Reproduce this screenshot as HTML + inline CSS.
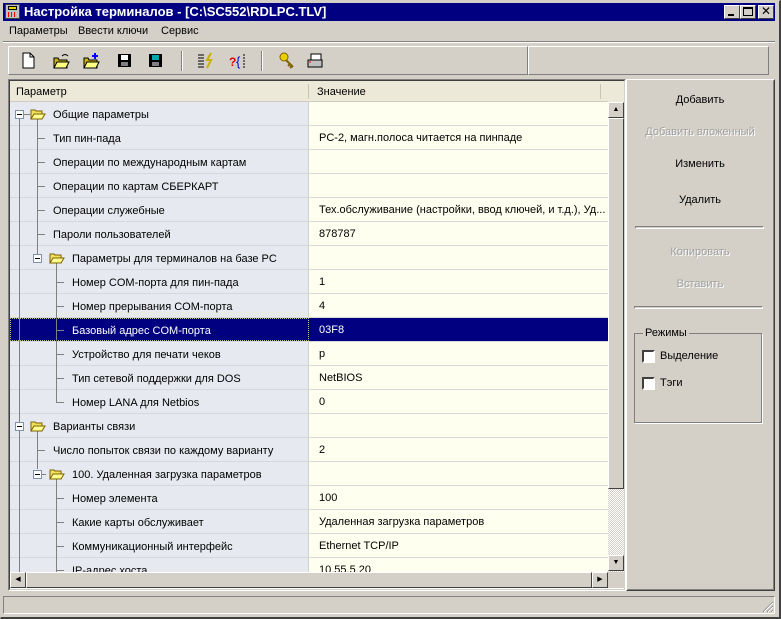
<!DOCTYPE html>
<html style="overflow:hidden"><head><meta charset="utf-8"><style>
*{margin:0;padding:0;box-sizing:border-box}
html,body{width:781px;height:619px;overflow:hidden}
body{background:#d4d0c8;font-family:"Liberation Sans","DejaVu Sans",sans-serif;font-size:11px;position:relative;color:#000}
.a{position:absolute}
.t{position:absolute;white-space:nowrap;line-height:13px}
.rs{position:absolute;left:10px;width:598px;height:24px;border-bottom:1px solid #d8d8d8}
.nm{position:absolute;left:0;top:0;width:299px;height:23px;background:#e6e9ef;border-right:1px solid #d0d0d0}
.vl{position:absolute;left:299px;top:0;width:299px;height:23px;background:#fffff0}
.rs .t{top:6px}
.btn{position:absolute;left:627px;width:146px;text-align:center}
.dis{color:#a0a0a0;text-shadow:1px 1px 0 #fff}
.box{position:absolute;width:9px;height:9px;border:1px solid #8090a8;background:#fff}
.box:after{content:"";position:absolute;left:1px;top:3px;width:5px;height:1px;background:#000}
</style></head><body>
<div class="a" style="left:0;top:0;width:781px;height:619px;border:1px solid #d4d0c8;border-right:2px solid #404040;border-bottom:2px solid #404040"></div>
<div class="a" style="left:3px;top:3px;width:772px;height:18px;background:#000080"></div>
<div class="a" style="left:5px;top:4px;width:15px;height:15px;background:#c0c0c0;border:1px solid #404040"><div class="a" style="left:2px;top:1px;width:9px;height:4px;background:#e8d800;border:1px solid #000"></div><div class="a" style="left:2px;top:7px;width:9px;height:5px;background:repeating-linear-gradient(90deg,#f00 0 1px,#c0c0c0 1px 3px)"></div></div>
<div class="t" style="left:24px;top:5px;color:#fff;font-weight:bold;font-size:13px">Настройка терминалов - [C:\SC552\RDLPC.TLV]</div>
<div class="a" style="left:724px;top:5px;width:16px;height:14px;background:#d4d0c8;border:1px solid;border-color:#fff #404040 #404040 #fff"><div class="a" style="left:3px;top:8px;width:6px;height:2px;background:#000"></div></div>
<div class="a" style="left:740px;top:5px;width:16px;height:14px;background:#d4d0c8;border:1px solid;border-color:#fff #404040 #404040 #fff"><div class="a" style="left:2px;top:1px;width:10px;height:9px;border:1px solid #000;border-top-width:2px"></div></div>
<div class="a" style="left:758px;top:5px;width:16px;height:14px;background:#d4d0c8;border:1px solid;border-color:#fff #404040 #404040 #fff;font-weight:bold;font-size:12px;line-height:11px;text-align:center">✕</div>
<div class="t" style="left:9px;top:25px">Параметры</div>
<div class="t" style="left:78px;top:25px">Ввести ключи</div>
<div class="t" style="left:161px;top:25px">Сервис</div>
<div class="a" style="left:3px;top:41px;width:772px;height:1px;background:#808080"></div>
<div class="a" style="left:3px;top:42px;width:772px;height:1px;background:#fff"></div>
<div class="a" style="left:8px;top:46px;width:520px;height:29px;border:1px solid;border-color:#fff #808080 #808080 #fff"></div>
<div class="a" style="left:528px;top:46px;width:241px;height:29px;border:1px solid;border-color:#fff #808080 #808080 #fff"></div>
<svg class="a" style="left:18px;top:50px" width="350" height="22">
<path d="M5 3h7l4 4v11H5z" fill="#fff" stroke="#000"/><path d="M12 3v4h4" fill="none" stroke="#000"/>
<path d="M36 8h4l1 2h8v8H36z" fill="#c8b400" stroke="#000"/><path d="M36 18l3-6h12l-3 6z" fill="#ffff80" stroke="#000"/><path d="M44 6q3-3 6 0" fill="none" stroke="#000"/>
<path d="M66 8h4l1 2h8v8H66z" fill="#c8b400" stroke="#000"/><path d="M66 18l3-6h12l-3 6z" fill="#ffff80" stroke="#000"/><path d="M77 3v6M74 6h6" stroke="#00f" stroke-width="2"/>
<rect x="100" y="4" width="13" height="13" fill="#000"/><rect x="103" y="5" width="7" height="5" fill="#fff"/><rect x="103" y="12" width="7" height="4" fill="#808080"/>
<rect x="131" y="4" width="13" height="13" fill="#000"/><rect x="134" y="5" width="7" height="5" fill="#0aa"/><rect x="134" y="12" width="7" height="4" fill="#808080"/>
<path d="M180 5h6M180 8h6M180 11h6M180 14h6M180 17h6" stroke="#000"/><path d="M193 3l-4 7h4l-4 8" fill="none" stroke="#c8b000" stroke-width="2"/>
<text x="211" y="16" fill="#e00000" font-weight="bold" font-size="12" font-family="Liberation Sans">?</text><text x="218" y="16" fill="#0000e0" font-size="13" font-family="Liberation Sans">{</text><path d="M226 4v14" stroke="#000" stroke-dasharray="2 1"/>
<circle cx="266" cy="7" r="4" fill="#e8d000" stroke="#806000"/><path d="M268 10l7 7M272 14l-2 2M274 16l-2 2" stroke="#806000" stroke-width="2"/>
<rect x="293" y="4" width="10" height="10" fill="#fff" stroke="#000"/><rect x="290" y="10" width="14" height="7" fill="#c0c0c0" stroke="#000"/><path d="M291 12h2" stroke="#f00"/>
</svg>
<div class="a" style="left:181px;top:51px;width:2px;height:20px;border-left:1px solid #808080;border-right:1px solid #fff"></div>
<div class="a" style="left:261px;top:51px;width:2px;height:20px;border-left:1px solid #808080;border-right:1px solid #fff"></div>
<div class="a" style="left:8px;top:79px;width:618px;height:512px;border:1px solid;border-color:#808080 #fff #fff #808080"></div>
<div class="a" style="left:9px;top:80px;width:616px;height:510px;border:1px solid;border-color:#404040 #d4d0c8 #d4d0c8 #404040;background:#fff"></div>
<div class="a" style="left:10px;top:81px;width:598px;height:21px;background:#ece9d8;border-bottom:1px solid #d0ccc0"></div>
<div class="a" style="left:308px;top:84px;width:1px;height:15px;background:#c8c4b8"></div>
<div class="a" style="left:600px;top:84px;width:1px;height:15px;background:#c8c4b8"></div>
<div class="t" style="left:16px;top:86px">Параметр</div>
<div class="t" style="left:317px;top:86px">Значение</div>
<div class="a" style="left:608px;top:81px;width:16px;height:21px;background:#ece9d8"></div>

<div class="a" style="left:10px;top:102px;width:598px;height:470px;overflow:hidden">
<div style="position:absolute;left:-10px;top:-102px;width:620px;height:572px">
<div class="rs" style="top:102px"><div class="nm"></div><div class="vl"></div></div>
<div class="rs" style="top:126px"><div class="nm"></div><div class="vl"><div class="t" style="left:10px">PC-2, магн.полоса читается на пинпаде</div></div></div>
<div class="rs" style="top:150px"><div class="nm"></div><div class="vl"></div></div>
<div class="rs" style="top:174px"><div class="nm"></div><div class="vl"></div></div>
<div class="rs" style="top:198px"><div class="nm"></div><div class="vl"><div class="t" style="left:10px">Тех.обслуживание (настройки, ввод ключей, и т.д.), Уд...</div></div></div>
<div class="rs" style="top:222px"><div class="nm"></div><div class="vl"><div class="t" style="left:10px">878787</div></div></div>
<div class="rs" style="top:246px"><div class="nm"></div><div class="vl"></div></div>
<div class="rs" style="top:270px"><div class="nm"></div><div class="vl"><div class="t" style="left:10px">1</div></div></div>
<div class="rs" style="top:294px"><div class="nm"></div><div class="vl"><div class="t" style="left:10px">4</div></div></div>
<div class="rs" style="top:318px"><div class="nm" style="background:#000080;border:1px dotted #c0c080"></div><div class="vl" style="background:#000080"><div class="t" style="left:10px;color:#fff">03F8</div></div></div>
<div class="rs" style="top:342px"><div class="nm"></div><div class="vl"><div class="t" style="left:10px">p</div></div></div>
<div class="rs" style="top:366px"><div class="nm"></div><div class="vl"><div class="t" style="left:10px">NetBIOS</div></div></div>
<div class="rs" style="top:390px"><div class="nm"></div><div class="vl"><div class="t" style="left:10px">0</div></div></div>
<div class="rs" style="top:414px"><div class="nm"></div><div class="vl"></div></div>
<div class="rs" style="top:438px"><div class="nm"></div><div class="vl"><div class="t" style="left:10px">2</div></div></div>
<div class="rs" style="top:462px"><div class="nm"></div><div class="vl"></div></div>
<div class="rs" style="top:486px"><div class="nm"></div><div class="vl"><div class="t" style="left:10px">100</div></div></div>
<div class="rs" style="top:510px"><div class="nm"></div><div class="vl"><div class="t" style="left:10px">Удаленная загрузка параметров</div></div></div>
<div class="rs" style="top:534px"><div class="nm"></div><div class="vl"><div class="t" style="left:10px">Ethernet TCP/IP</div></div></div>
<div class="rs" style="top:558px"><div class="nm"></div><div class="vl"><div class="t" style="left:10px">10.55.5.20</div></div></div>
<svg class="a" style="left:0;top:0" width="320" height="572">
<g stroke="#808080" fill="none">
<path d="M19.5 119v453M24 114.5h6"/>
<path d="M37.5 119v141M37 138.5h8M37 162.5h8M37 186.5h8M37 210.5h8M37 234.5h8"/>
<path d="M56.5 263v140M56 282.5h8M56 306.5h8M56 330.5h8M56 354.5h8M56 378.5h8M56 402.5h8"/>
<path d="M37.5 431v38M37 450.5h8M42 474.5h4"/>
<path d="M56.5 479v93M56 498.5h8M56 522.5h8M56 546.5h8M56 570.5h8"/>
</g>
<g fill="#f0e060" stroke="#806000">
<path d="M31 110h4l1 1h6v8H31z"/><path d="M31 119l3-5h11l-3 5z" fill="#ffff90"/>
<path d="M50 254h4l1 1h6v8H50z"/><path d="M50 263l3-5h11l-3 5z" fill="#ffff90"/>
<path d="M31 422h4l1 1h6v8H31z"/><path d="M31 431l3-5h11l-3 5z" fill="#ffff90"/>
<path d="M50 470h4l1 1h6v8H50z"/><path d="M50 479l3-5h11l-3 5z" fill="#ffff90"/>
</g>
</svg>
<div class="box" style="left:15px;top:110px"></div>
<div class="box" style="left:33px;top:254px"></div>
<div class="box" style="left:15px;top:422px"></div>
<div class="box" style="left:33px;top:470px"></div>
<div class="t" style="left:53px;top:109px">Общие параметры</div>
<div class="t" style="left:53px;top:133px">Тип пин-пада</div>
<div class="t" style="left:53px;top:157px">Операции по международным картам</div>
<div class="t" style="left:53px;top:181px">Операции по картам СБЕРКАРТ</div>
<div class="t" style="left:53px;top:205px">Операции служебные</div>
<div class="t" style="left:53px;top:229px">Пароли пользователей</div>
<div class="t" style="left:72px;top:253px">Параметры для терминалов на базе PC</div>
<div class="t" style="left:72px;top:277px">Номер COM-порта для пин-пада</div>
<div class="t" style="left:72px;top:301px">Номер прерывания COM-порта</div>
<div class="t" style="left:72px;top:325px;color:#fff">Базовый адрес COM-порта</div>
<div class="t" style="left:72px;top:349px">Устройство для печати чеков</div>
<div class="t" style="left:72px;top:373px">Тип сетевой поддержки для DOS</div>
<div class="t" style="left:72px;top:397px">Номер LANA для Netbios</div>
<div class="t" style="left:53px;top:421px">Варианты связи</div>
<div class="t" style="left:53px;top:445px">Число попыток связи по каждому варианту</div>
<div class="t" style="left:72px;top:469px">100. Удаленная загрузка параметров</div>
<div class="t" style="left:72px;top:493px">Номер элемента</div>
<div class="t" style="left:72px;top:517px">Какие карты обслуживает</div>
<div class="t" style="left:72px;top:541px">Коммуникационный интерфейс</div>
<div class="t" style="left:72px;top:565px">IP-адрес хоста</div>
</div></div>
<div class="a" style="left:608px;top:102px;width:16px;height:470px;background:repeating-conic-gradient(#d4d0c8 0 25%,#fff 0 50%) 0 0/2px 2px"></div>
<div class="a" style="left:608px;top:102px;width:16px;height:16px;background:#d4d0c8;border:1px solid;border-color:#fff #404040 #404040 #fff;font-size:7px;text-align:center;line-height:13px">▲</div>
<div class="a" style="left:608px;top:118px;width:16px;height:371px;background:#d4d0c8;border:1px solid;border-color:#fff #404040 #404040 #fff"></div>
<div class="a" style="left:608px;top:555px;width:16px;height:16px;background:#d4d0c8;border:1px solid;border-color:#fff #404040 #404040 #fff;font-size:7px;text-align:center;line-height:13px">▼</div>
<div class="a" style="left:10px;top:572px;width:598px;height:16px;background:repeating-conic-gradient(#d4d0c8 0 25%,#fff 0 50%) 0 0/2px 2px"></div>
<div class="a" style="left:10px;top:572px;width:16px;height:16px;background:#d4d0c8;border:1px solid;border-color:#fff #404040 #404040 #fff;font-size:7px;text-align:center;line-height:13px">◀</div>
<div class="a" style="left:26px;top:572px;width:566px;height:16px;background:#d4d0c8;border:1px solid;border-color:#fff #404040 #404040 #fff"></div>
<div class="a" style="left:592px;top:572px;width:16px;height:16px;background:#d4d0c8;border:1px solid;border-color:#fff #404040 #404040 #fff;font-size:7px;text-align:center;line-height:13px">▶</div>
<div class="a" style="left:608px;top:572px;width:16px;height:16px;background:#d4d0c8"></div>
<div class="a" style="left:626px;top:79px;width:149px;height:512px;border:1px solid;border-color:#fff #404040 #404040 #fff"></div>
<div class="a" style="left:627px;top:80px;width:147px;height:510px;border:1px solid;border-color:#d4d0c8 #808080 #808080 #d4d0c8"></div>
<div class="btn t" style="top:94px">Добавить</div>
<div class="btn t dis" style="top:126px">Добавить вложенный</div>
<div class="btn t" style="top:158px">Изменить</div>
<div class="btn t" style="top:194px">Удалить</div>
<div class="a" style="left:635px;top:226px;width:129px;height:3px;border:1px solid;border-color:#808080 #fff #fff #808080"></div>
<div class="btn t dis" style="top:246px">Копировать</div>
<div class="btn t dis" style="top:278px">Вставить</div>
<div class="a" style="left:634px;top:306px;width:129px;height:3px;border:1px solid;border-color:#808080 #fff #fff #808080"></div>
<div class="a" style="left:634px;top:333px;width:128px;height:90px;border:1px solid #808080;box-shadow:1px 1px 0 #fff"></div>
<div class="t" style="left:643px;top:327px;background:#d4d0c8;padding:0 2px">Режимы</div>
<div class="a" style="left:642px;top:350px;width:13px;height:13px;background:#fff;border:2px solid;border-color:#404040 #fff #fff #404040"></div>
<div class="t" style="left:660px;top:350px">Выделение</div>
<div class="a" style="left:642px;top:377px;width:13px;height:13px;background:#fff;border:2px solid;border-color:#404040 #fff #fff #404040"></div>
<div class="t" style="left:660px;top:377px">Тэги</div>
<div class="a" style="left:3px;top:596px;width:772px;height:18px;border:1px solid;border-color:#808080 #fff #fff #808080"></div>
<svg class="a" style="left:762px;top:601px" width="12" height="12"><path d="M11 1L1 11M11 5L5 11M11 9L9 11" stroke="#808080"/><path d="M11 2L2 11M11 6L6 11M11 10L10 11" stroke="#fff"/></svg>
</body></html>
